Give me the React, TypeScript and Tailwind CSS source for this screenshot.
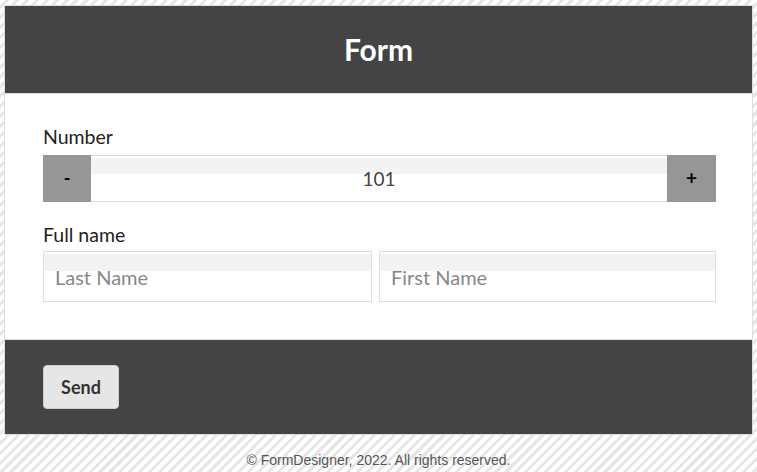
export default function App() {
  return (
    <div className="min-h-screen bg-[repeating-linear-gradient(135deg,#ffffff_0px,#ffffff_4px,#e6e6e6_4px,#e6e6e6_7px)] px-[4px] pt-[5px] font-['Lato',sans-serif]">
      <div className="border border-[#dddddd] bg-white">
        <div className="flex h-[88px] items-center justify-center border-b border-[#dddddd] bg-[#444444]">
          <h1 className="text-[30px] font-bold text-white">Form</h1>
        </div>
        <div className="pb-[37px] pl-[38px] pr-[36px] pt-[32px]">
          <label className="block text-[19.5px] leading-[22px] text-[#222222]">Number</label>
          <div className="mt-[7px] flex h-[47px]">
            <button className="w-[48px] bg-[#969696] text-[18px] font-bold text-black">-</button>
            <div className="flex flex-1 items-center justify-center border-y border-[#dddddd] bg-[linear-gradient(to_bottom,#fff_0,#fff_2px,#f3f3f3_2px,#f3f3f3_18px,#fff_18px)] pt-[2px] text-[19px] text-[#444444]">
              101
            </div>
            <button className="w-[49px] bg-[#969696] text-[19px] font-bold text-black">+</button>
          </div>
          <label className="mt-[22px] block text-[19.5px] leading-[22px] text-[#222222]">Full name</label>
          <div className="mt-[5px] flex gap-[7px]">
            <div className="flex h-[51px] w-[329px] items-center border border-[#dddddd] bg-[linear-gradient(to_bottom,#fff_0,#fff_2px,#f3f3f3_2px,#f3f3f3_19px,#fff_19px)] pl-[11px] pt-[1px] text-[20px] text-[#888888]">
              Last Name
            </div>
            <div className="flex h-[51px] flex-1 items-center border border-[#dddddd] bg-[linear-gradient(to_bottom,#fff_0,#fff_2px,#f3f3f3_2px,#f3f3f3_19px,#fff_19px)] pl-[11px] pt-[1px] text-[20px] text-[#888888]">
              First Name
            </div>
          </div>
        </div>
        <div className="border-t border-[#dddddd] bg-[#444444] px-[38px] py-[25px]">
          <button className="h-[44px] w-[76px] rounded-[4px] border border-[#cccccc] bg-[#e6e6e6] text-[18px] font-bold text-[#333333]">
            Send
          </button>
        </div>
      </div>
      <p className="py-[15px] text-center font-['Liberation_Sans',Arial,sans-serif] text-[14px] text-[#555555]">
        © FormDesigner, 2022. All rights reserved.
      </p>
    </div>
  );
}
